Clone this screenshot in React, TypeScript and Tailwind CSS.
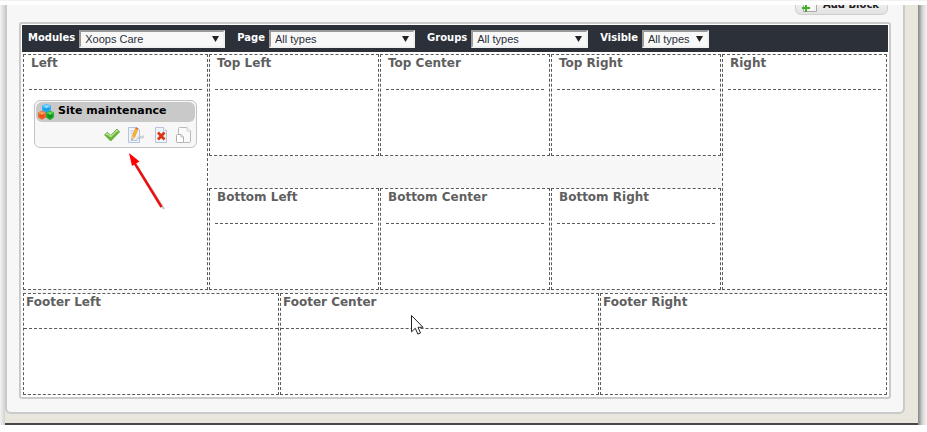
import type { ReactNode } from "react";

const dash = "border border-dashed border-[#5a5a5a]";

function Filter({ id, label, value, width }: { id: string; label: string; value: string; width: string }) {
  return (
    <div className="flex items-start">
      <label htmlFor={id} className="mr-1 text-[10px] leading-4 font-bold text-white">
        {label}
      </label>
      <div className={`relative ${width}`}>
        <select
          id={id}
          className="block h-[18px] w-full appearance-none border-2 border-t-[#9a9a9a] border-l-[#9a9a9a] border-r-[#f0f0f0] border-b-[#f0f0f0] bg-[#f8f8f8] pl-1 font-['Liberation_Sans',sans-serif] text-[11px] leading-[14px] text-[#2b303a]"
        >
          <option>{value}</option>
        </select>
        <svg className="pointer-events-none absolute top-[6px] right-[6px]" width="7" height="6" viewBox="0 0 7 6" aria-hidden="true">
          <path d="M0 0h7L3.5 6z" fill="#222" />
        </svg>
      </div>
    </div>
  );
}

function Zone({ title, children }: { title: string; children?: ReactNode }) {
  return (
    <section className={`${dash} bg-white px-[5px]`}>
      <h2 className="h-[35px] border-b border-dashed border-[#5a5a5a] px-[2px] text-[12px] leading-4 font-bold">{title}</h2>
      <div className="min-h-[65px] px-[5px]">{children}</div>
    </section>
  );
}

function FooterZone({ title }: { title: string }) {
  return (
    <section className={`${dash} bg-white`}>
      <h2 className="h-[35px] border-b border-dashed border-[#5a5a5a] px-[2px] text-[12px] leading-4 font-bold">{title}</h2>
      <div className="min-h-[65px]" />
    </section>
  );
}

function CubesIcon() {
  return (
    <svg width="16" height="16" viewBox="0 0 16 16" strokeLinejoin="round" aria-hidden="true">
      <path d="M5 2.200L8.500 1 12 2.200v4L8.500 8.500 5 6.200z" fill="#1d9fe8" stroke="#2caef0" strokeWidth="1.800" />
      <path d="M5 2.200L8.500 1 12 2.200 8.500 4z" fill="#8be2ff" stroke="#6fd0fb" />
      <path d="M1 9l3-1.300L7 9v4l-3 1.800L1 13z" fill="#e2521a" stroke="#ef6426" strokeWidth="1.800" />
      <path d="M1 9l3-1.300L7 9l-3 1.500z" fill="#ffad78" stroke="#fb8e52" />
      <path d="M9 9l3-1.300L15 9v4l-3 2-3-2z" fill="#118f20" stroke="#1ca52a" strokeWidth="1.800" />
      <path d="M9 9l3-1.300L15 9l-3 1.500z" fill="#7be36a" stroke="#4bcb44" />
    </svg>
  );
}

function CheckIcon() {
  return (
    <svg width="16" height="16" viewBox="0 0 16 16" aria-hidden="true">
      <path d="M.5 7.800L3.300 5.300l3.400 3L13 2l2.700 2.700L6.700 14z" fill="#69b935" stroke="#5a9c38" strokeWidth=".8" strokeLinejoin="round" />
      <path d="M1.800 7.800L3.300 6.500l3.400 3L13 3.300l1.200 1.200" fill="none" stroke="#bde79a" strokeWidth="1.300" />
    </svg>
  );
}

function EditIcon() {
  return (
    <svg width="17" height="16" viewBox="0 0 17 16" aria-hidden="true">
      <path d="M1.500.5h8.500l2.500 2.500v12.500h-11z" fill="#edf4fc" stroke="#b4c5dc" />
      <path d="M12 9l5-.5v2.500L8 13z" fill="#b5bcc4" opacity=".6" />
      <path d="M3.500 4h3M3.500 6.500h2M3.500 13.500h7" stroke="#b9cbe2" />
      <path d="M8.300 1.500l2.500 1.200-3.300 8-2.700 2.100.2-3.500z" fill="#fbb52d" stroke="#df8b18" strokeWidth=".5" />
      <path d="M8.300 1.500l.8-1.200 2.400 1.100-.7 1.300z" fill="#d9694b" />
      <path d="M5 9.300l2.500 1.400-2.700 2.100z" fill="#f2d6a2" />
      <path d="M4.900 11.500l.9.500-1 .8z" fill="#333" />
    </svg>
  );
}

function DeleteIcon() {
  return (
    <svg width="16" height="16" viewBox="0 0 16 16" aria-hidden="true">
      <path d="M2.500.5h8l3 3v12h-11z" fill="#edf4fc" stroke="#b4c5dc" />
      <path d="M10.500.5v3h3" fill="#fff" stroke="#bfd0e4" />
      <path d="M5 5.500l6.500 7M11.500 5.500L5 12.500" stroke="#dd3414" strokeWidth="2.600" />
    </svg>
  );
}

function CloneIcon() {
  return (
    <svg width="16" height="16" viewBox="0 0 16 16" strokeLinejoin="round" aria-hidden="true">
      <path d="M2.500 8V1.500q0-1 1-1H11L14.500 4v10.500q0 1-1 1H6" fill="#fafafa" stroke="#bababa" />
      <path d="M11 .5V4h3.500" fill="#fff" stroke="#cacaca" />
      <path d="M.5 8.500q0-1 1-1H5L7.500 10v4.500q0 1-1 1h-5q-1 0-1-1z" fill="#fff" stroke="#adadad" />
      <path d="M5 7.500V10h2.500" fill="none" stroke="#bbb" />
    </svg>
  );
}

function BlockCard() {
  return (
    <article className="mt-[10px] rounded-md border border-[#c4c4c4] bg-[#f7f7f7] p-px">
      <h3 className="flex h-5 items-start rounded-md bg-[#c9c9c9] pt-[2px] pl-[2px] text-[11px] leading-[14px] font-bold text-black">
        <CubesIcon />
        <span className="ml-1">Site maintenance</span>
      </h3>
      <div className="flex h-6 items-center justify-end gap-[7px] pt-px pr-[3px]">
        <button type="button" aria-label="Hide block"><CheckIcon /></button>
        <button type="button" aria-label="Edit block" className="mr-[2px]"><EditIcon /></button>
        <button type="button" aria-label="Delete block"><DeleteIcon /></button>
        <button type="button" aria-label="Clone block"><CloneIcon /></button>
      </div>
    </article>
  );
}

export default function App() {
  return (
    <div className="relative bg-white pt-[5px] pb-[7px] font-['DejaVu_Sans',sans-serif] text-[#5f5f5f]">
      <div className="absolute inset-x-0 top-0 h-px bg-[#f2f2f2]" />
      <div className="flex">
        <div className="w-[5px] bg-linear-to-r from-[#f3f3f3] to-[#d2d2d2]" />
        <div className="flex-1 border-b-2 border-[#484848] bg-[#e8e6dd] pb-[9px]">
          <main className="mr-[13px] rounded-b-md border-2 border-t-0 border-[#cacaca] bg-[#f7f7f7] px-3 pb-[13px]">
            <div className="mr-[3px] flex h-[10px] items-end justify-end overflow-hidden">
              <button
                type="button"
                className="flex h-6 items-center gap-[6px] rounded-md border border-[#cfcfcf] bg-linear-to-b from-white to-[#e2e2e2] pt-1 pr-2 pl-[5px] text-[10px] leading-[14px] font-bold text-[#222]"
              >
                <svg width="16" height="16" viewBox="0 0 16 16" aria-hidden="true">
                  <path d="M2.500.5h13v14h-13z" fill="#f6f6f6" stroke="#a8a8a8" />
                  <path d="M5 7v8M1 11h8" stroke="#42ad26" strokeWidth="2" />
                </svg>
                <span>Add Block</span>
              </button>
            </div>

            <div className="mt-[7px] rounded-[3px] border-2 border-[#cacaca] bg-white p-px">
              <form className="flex h-[27px] items-start gap-3 bg-[#2c3039] pt-[5px] pl-[6px]">
                <Filter id="modules" label="Modules" value="Xoops Care" width="w-[146px]" />
                <Filter id="page" label="Page" value="All types" width="w-[146px]" />
                <Filter id="groups" label="Groups" value="All types" width="w-[117px]" />
                <Filter id="visible" label="Visible" value="All types" width="w-[67px]" />
              </form>

              <div className="mt-[2px] grid grid-cols-[185fr_512fr_165fr] gap-px px-px">
                <Zone title="Left">
                  <BlockCard />
                </Zone>
                <div className="flex flex-col">
                  <div className="grid grid-cols-3 gap-px">
                    <Zone title="Top Left" />
                    <Zone title="Top Center" />
                    <Zone title="Top Right" />
                  </div>
                  <div className="h-8 bg-[#f7f7f7]" />
                  <div className="grid grid-cols-3 gap-px">
                    <Zone title="Bottom Left" />
                    <Zone title="Bottom Center" />
                    <Zone title="Bottom Right" />
                  </div>
                </div>
                <Zone title="Right" />
              </div>

              <div className="h-[3px] bg-[#f7f7f7]" />

              <div className="mb-px grid grid-cols-[256fr_319fr_287fr] gap-px px-px">
                <FooterZone title="Footer Left" />
                <FooterZone title="Footer Center" />
                <FooterZone title="Footer Right" />
              </div>
            </div>
          </main>
        </div>
        <div className="w-[9px] bg-linear-to-r from-[#858585] via-[#d5d5d5] to-[#f5f5f5]" />
      </div>

      <svg className="pointer-events-none absolute top-[152px] left-[127px]" width="40" height="60" viewBox="0 0 40 60" aria-hidden="true">
        <path d="M10 14L37 57" stroke="#888" strokeWidth="2" opacity=".5" />
        <path d="M7.500 11L34.500 55" stroke="#ee0d0d" strokeWidth="2.400" />
        <path d="M2 1l10.500 8.500-7.500 4.500z" fill="#f00" />
      </svg>
      <svg className="pointer-events-none absolute top-[315px] left-[411px]" width="13" height="20" viewBox="0 0 13 20" aria-hidden="true">
        <path d="M.5.5v16.300l3.800-3.500L6.800 19l2.700-1-2.500-5.700h5z" fill="#fff" stroke="#23232d" />
      </svg>
    </div>
  );
}
